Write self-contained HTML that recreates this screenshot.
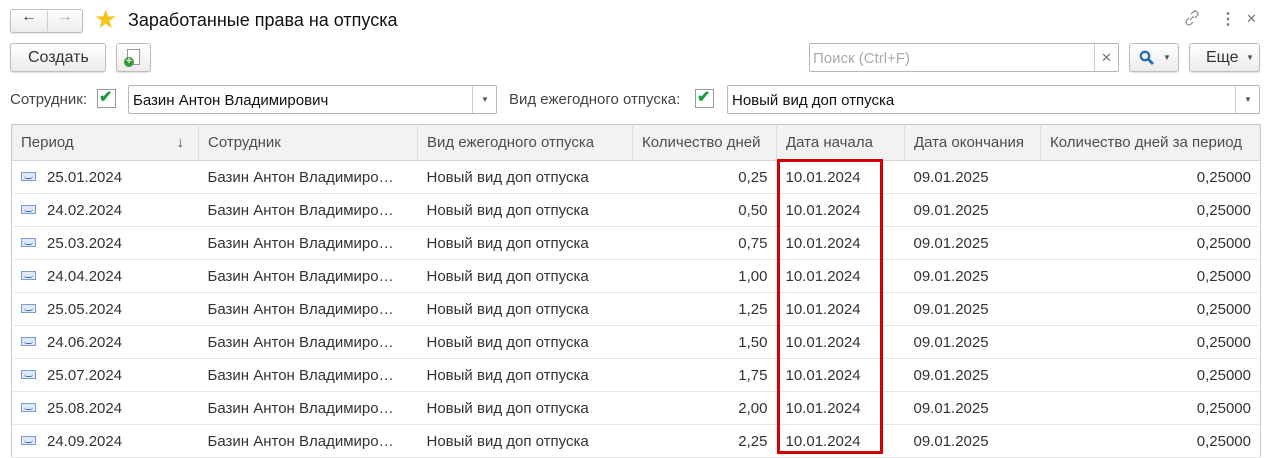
<!DOCTYPE html>
<html><head><meta charset="utf-8"><style>
*{box-sizing:border-box;margin:0;padding:0}
body{width:1271px;height:454px;overflow:hidden;background:#fff;font-family:"Liberation Sans",Arial,sans-serif;font-size:15px;color:#333;position:relative}
.a{position:absolute}
.btn{position:absolute;border:1px solid #bdbdbd;border-radius:3px;background:linear-gradient(#fff,#ececec);box-shadow:0 1px 1px rgba(0,0,0,.12)}
.inp{position:absolute;border:1px solid #b5b5b5;border-radius:2px;background:#fff}
.cb{position:absolute;width:19px;height:19px;border:1px solid #999;background:#fff}
table{position:absolute;left:11px;top:124px;width:1249px;border-collapse:collapse;border:1px solid #c8c8c8;table-layout:fixed}
th{height:36px;background:#f2f2f2;font-weight:normal;color:#4d4d4d;text-align:left;padding-left:9px;border-right:1px solid #dcdcdc;border-bottom:1px solid #d4d4d4;font-size:15px;white-space:nowrap}
td{height:33px;padding-left:9px;border-bottom:1px solid #e6e6e6;white-space:nowrap;overflow:hidden;font-size:15px;color:#333}
td.r{text-align:right;padding-right:9px}
.ic{display:inline-block;width:15px;height:9px;border:1px solid #7b9ccc;background:#dfe9f7;margin-right:11px;vertical-align:1px;position:relative}
.ic:after{content:"";position:absolute;left:2px;top:2px;width:9px;height:3px;border-bottom:1px solid #3d6fb5;border-radius:0 0 3px 3px}
</style></head><body>
<div class="btn" style="left:10px;top:9px;width:73px;height:24px"></div>
<div class="a" style="left:47px;top:11px;width:1px;height:20px;background:#d0d0d0"></div>
<div class="a" style="left:21px;top:8px;font-size:16px;color:#444">&#8592;</div>
<div class="a" style="left:57px;top:8px;font-size:16px;color:#aaa">&#8594;</div>
<div class="a" style="left:94px;top:4px;font-size:26px;color:#f5c518;line-height:30px">&#9733;</div>
<div class="a" style="left:128px;top:10px;font-size:18px;color:#111">Заработанные права на отпуска</div>
<svg class="a" style="left:1184px;top:10px" width="16" height="16"><path d="M6 10 L10 6 M7 4 L9 2 Q11 0 13 2 Q15 4 13 6 L11 8 M9 12 L7 14 Q5 16 3 14 Q1 12 3 10 L5 8" fill="none" stroke="#888" stroke-width="1.2"/></svg>
<div class="a" style="left:1220px;top:9px;font-size:16px;color:#777;font-weight:bold">&#8942;</div>
<div class="a" style="left:1246px;top:11px;font-size:13px;color:#777">&#10005;</div>

<div class="btn" style="left:10px;top:43px;width:96px;height:29px"></div>
<div class="a" style="left:28px;top:49px;font-size:16px;color:#333">Создать</div>
<div class="btn" style="left:116px;top:43px;width:35px;height:29px"></div>
<div class="a" style="left:127px;top:49px;width:13px;height:16px;border:1px solid #999;background:#fff"></div>
<div class="a" style="left:124px;top:57px;width:10px;height:10px;border-radius:50%;background:#3a9a3a;color:#fff;font-size:10px;line-height:10px;text-align:center;font-weight:bold">+</div>

<div class="inp" style="left:809px;top:43px;width:310px;height:29px"></div>
<div class="a" style="left:1094px;top:44px;width:1px;height:27px;background:#ccc"></div>
<div class="a" style="left:813px;top:50px;color:#aaa;font-size:15px">Поиск (Ctrl+F)</div>
<div class="a" style="left:1101px;top:50px;color:#777;font-size:13px">&#10005;</div>
<div class="btn" style="left:1129px;top:43px;width:50px;height:29px"></div>
<svg class="a" style="left:1139px;top:50px" width="16" height="16"><circle cx="6" cy="6" r="4.2" fill="none" stroke="#2a6fb8" stroke-width="2.4"/><line x1="9" y1="9" x2="14" y2="14" stroke="#2a6fb8" stroke-width="3"/></svg>
<div class="a" style="left:1163px;top:53px;font-size:8px;color:#555">&#9660;</div>
<div class="btn" style="left:1189px;top:43px;width:71px;height:29px"></div>
<div class="a" style="left:1206px;top:49px;font-size:16px;color:#333">Еще</div>
<div class="a" style="left:1246px;top:53px;font-size:8px;color:#555">&#9660;</div>

<div class="a" style="left:10px;top:91px;color:#444">Сотрудник:</div>
<div class="cb" style="left:97px;top:89px"></div>
<div class="a" style="left:99px;top:87px;font-size:16px;color:#1d9a3c;font-weight:bold">&#10004;</div>
<div class="inp" style="left:128px;top:85px;width:369px;height:29px"></div>
<div class="a" style="left:472px;top:86px;width:1px;height:27px;background:#ccc"></div>
<div class="a" style="left:481px;top:95px;font-size:8px;color:#555">&#9660;</div>
<div class="a" style="left:133px;top:92px;color:#111">Базин Антон Владимирович</div>
<div class="a" style="left:509px;top:91px;color:#444">Вид ежегодного отпуска:</div>
<div class="cb" style="left:695px;top:89px"></div>
<div class="a" style="left:697px;top:87px;font-size:16px;color:#1d9a3c;font-weight:bold">&#10004;</div>
<div class="inp" style="left:727px;top:85px;width:533px;height:29px"></div>
<div class="a" style="left:1235px;top:86px;width:1px;height:27px;background:#ccc"></div>
<div class="a" style="left:1244px;top:95px;font-size:8px;color:#555">&#9660;</div>
<div class="a" style="left:732px;top:92px;color:#111">Новый вид доп отпуска</div>

<table>
<colgroup><col style="width:187px"><col style="width:219px"><col style="width:215px"><col style="width:144px"><col style="width:128px"><col style="width:136px"><col style="width:220px"></colgroup>
<tr><th>Период<span style="float:right;margin-right:14px">&#8595;</span></th><th>Сотрудник</th><th>Вид ежегодного отпуска</th><th>Количество дней</th><th>Дата начала</th><th>Дата окончания</th><th style="border-right:none">Количество дней за период</th></tr>
<tr><td><span class="ic"></span>25.01.2024</td><td>Базин Антон Владимиро…</td><td>Новый вид доп отпуска</td><td class="r">0,25</td><td>10.01.2024</td><td>09.01.2025</td><td class="r">0,25000</td></tr>
<tr><td><span class="ic"></span>24.02.2024</td><td>Базин Антон Владимиро…</td><td>Новый вид доп отпуска</td><td class="r">0,50</td><td>10.01.2024</td><td>09.01.2025</td><td class="r">0,25000</td></tr>
<tr><td><span class="ic"></span>25.03.2024</td><td>Базин Антон Владимиро…</td><td>Новый вид доп отпуска</td><td class="r">0,75</td><td>10.01.2024</td><td>09.01.2025</td><td class="r">0,25000</td></tr>
<tr><td><span class="ic"></span>24.04.2024</td><td>Базин Антон Владимиро…</td><td>Новый вид доп отпуска</td><td class="r">1,00</td><td>10.01.2024</td><td>09.01.2025</td><td class="r">0,25000</td></tr>
<tr><td><span class="ic"></span>25.05.2024</td><td>Базин Антон Владимиро…</td><td>Новый вид доп отпуска</td><td class="r">1,25</td><td>10.01.2024</td><td>09.01.2025</td><td class="r">0,25000</td></tr>
<tr><td><span class="ic"></span>24.06.2024</td><td>Базин Антон Владимиро…</td><td>Новый вид доп отпуска</td><td class="r">1,50</td><td>10.01.2024</td><td>09.01.2025</td><td class="r">0,25000</td></tr>
<tr><td><span class="ic"></span>25.07.2024</td><td>Базин Антон Владимиро…</td><td>Новый вид доп отпуска</td><td class="r">1,75</td><td>10.01.2024</td><td>09.01.2025</td><td class="r">0,25000</td></tr>
<tr><td><span class="ic"></span>25.08.2024</td><td>Базин Антон Владимиро…</td><td>Новый вид доп отпуска</td><td class="r">2,00</td><td>10.01.2024</td><td>09.01.2025</td><td class="r">0,25000</td></tr>
<tr><td><span class="ic"></span>24.09.2024</td><td>Базин Антон Владимиро…</td><td>Новый вид доп отпуска</td><td class="r">2,25</td><td>10.01.2024</td><td>09.01.2025</td><td class="r">0,25000</td></tr>
</table>
<div class="a" style="left:777px;top:159px;width:106px;height:295px;border:3px solid #d60000"></div>
</body></html>
